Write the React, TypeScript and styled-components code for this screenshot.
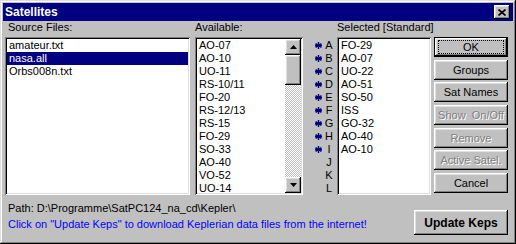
import React from "react";
import styled, { createGlobalStyle, css } from "styled-components";

const GlobalStyle = createGlobalStyle`
  html, body {
    margin: 0;
    padding: 0;
  }
  body {
    width: 516px;
    height: 244px;
    overflow: hidden;
    background: #c0c0c0;
    font-family: "Liberation Sans", Arial, sans-serif;
    font-size: 11px;
    color: #000;
  }
`;

const raised = css`
  background: #c0c0c0;
  box-shadow: inset -1px -1px #000, inset 1px 1px #fff,
    inset -2px -2px #808080, inset 2px 2px #dfdfdf;
`;

const sunken = css`
  background: #fff;
  box-shadow: inset 1px 1px #808080, inset -1px -1px #fff,
    inset 2px 2px #000, inset -2px -2px #dfdfdf;
`;

const Window = styled.div`
  width: 516px;
  height: 244px;
  box-sizing: border-box;
  padding: 3px;
  background: #c0c0c0;
  box-shadow: inset -1px -1px #000, inset 1px 1px #dfdfdf,
    inset -2px -2px #808080, inset 2px 2px #fff;
  display: flex;
  flex-direction: column;
`;

const TitleBar = styled.div`
  height: 18px;
  background: #000080;
  color: #fff;
  display: flex;
  align-items: center;
  justify-content: space-between;
  padding: 0 3px 0 2px;
  font-weight: bold;
  font-size: 12px;
`;

const CloseButton = styled.div`
  ${raised};
  width: 16px;
  height: 14px;
  display: flex;
  align-items: center;
  justify-content: center;
`;

const Content = styled.div`
  padding: 0 5px 0 2px;
  display: flex;
  flex-direction: column;
`;

const MainRow = styled.div`
  display: flex;
  align-items: flex-start;
`;

const Column = styled.div<{ $w: number; $ml?: number }>`
  width: ${(p) => p.$w}px;
  margin-left: ${(p) => p.$ml ?? 0}px;
  display: flex;
  flex-direction: column;
`;

const Label = styled.div<{ $indent?: number }>`
  height: 16px;
  line-height: 13px;
  padding-left: ${(p) => p.$indent ?? 0}px;
  white-space: nowrap;
`;

const ListBox = styled.div`
  ${sunken};
  height: 158px;
  box-sizing: border-box;
  padding: 2px;
  display: flex;
  overflow: hidden;
`;

const Items = styled.div`
  flex: 1;
  overflow: hidden;
`;

const Item = styled.div<{ $selected?: boolean }>`
  height: 13px;
  line-height: 13px;
  padding-left: 2px;
  white-space: nowrap;
  background: ${(p) => (p.$selected ? "#000080" : "transparent")};
  color: ${(p) => (p.$selected ? "#fff" : "#000")};
`;

const ScrollBar = styled.div`
  width: 16px;
  display: flex;
  flex-direction: column;
  background: repeating-conic-gradient(#c0c0c0 0 25%, #fff 0 50%) 0 0 / 2px
    2px;
`;

const ScrollButton = styled.div`
  ${raised};
  height: 16px;
  display: flex;
  align-items: center;
  justify-content: center;
`;

const Thumb = styled.div`
  ${raised};
  height: 30px;
`;

const Track = styled.div`
  flex: 1;
`;

const LetterColumn = styled.div`
  width: 34px;
  padding-top: 18px;
`;

const LetterRow = styled.div`
  height: 13px;
  display: flex;
  align-items: center;
  padding-left: 12px;
`;

const StarSlot = styled.div`
  width: 7px;
  height: 7px;
  display: flex;
`;

const Letter = styled.span`
  width: 14px;
  text-align: center;
  line-height: 13px;
`;

const ButtonColumn = styled.div`
  width: 74px;
  margin-left: 3px;
  padding-top: 16px;
  height: 172px;
  box-sizing: border-box;
  display: flex;
  flex-direction: column;
  justify-content: space-between;
`;

const Button = styled.div<{ $disabled?: boolean; $default?: boolean }>`
  ${raised};
  position: relative;
  height: 20px;
  box-sizing: border-box;
  display: flex;
  align-items: center;
  justify-content: center;
  white-space: pre;
  color: ${(p) => (p.$disabled ? "#808080" : "#000")};
  text-shadow: ${(p) => (p.$disabled ? "1px 1px #fff" : "none")};
  ${(p) =>
    p.$default &&
    css`
      box-shadow: inset 0 0 0 1px #000, inset -2px -2px #000,
        inset 2px 2px #fff, inset -3px -3px #808080, inset 3px 3px #dfdfdf;
      &::after {
        content: "";
        position: absolute;
        inset: 3px 4px 3px 4px;
        border: 1px dotted #000;
      }
    `}
`;

const BigButton = styled(Button)`
  width: 94px;
  height: 25px;
  margin-top: 15px;
  font-weight: bold;
  font-size: 12px;
`;

const Footer = styled.div`
  display: flex;
  justify-content: space-between;
  align-items: flex-start;
`;

const FooterText = styled.div`
  padding: 5px 0 0 3px;
  line-height: 16px;
  white-space: nowrap;
`;

const Hint = styled.div`
  color: #0000ff;
`;

const sourceFiles = ["amateur.txt", "nasa.all", "Orbs008n.txt"];
const available = [
  "AO-07",
  "AO-10",
  "UO-11",
  "RS-10/11",
  "FO-20",
  "RS-12/13",
  "RS-15",
  "FO-29",
  "SO-33",
  "AO-40",
  "VO-52",
  "UO-14",
];
const selected = [
  "FO-29",
  "AO-07",
  "UO-22",
  "AO-51",
  "SO-50",
  "ISS",
  "GO-32",
  "AO-40",
  "AO-10",
];
const letters = "ABCDEFGHIJKL".split("");

const Star = () => (
  <svg width="7" height="7" viewBox="0 0 7 7">
    <path
      d="M3.5 0V7M0.6 1.6L6.4 5.4M0.6 5.4L6.4 1.6M0 3.5H7"
      stroke="#000080"
      strokeWidth="1.4"
    />
  </svg>
);

const CloseIcon = () => (
  <svg width="8" height="7" viewBox="0 0 8 7">
    <path d="M0.5 0.5L7.5 6.5M7.5 0.5L0.5 6.5" stroke="#000" strokeWidth="1.6" />
  </svg>
);

const Arrow = ({ up }: { up?: boolean }) => (
  <svg width="7" height="4" viewBox="0 0 7 4">
    <path d={up ? "M3.5 0L7 4H0Z" : "M0 0H7L3.5 4Z"} fill="#000" />
  </svg>
);

const buttons = [
  { label: "OK", default: true },
  { label: "Groups" },
  { label: "Sat Names" },
  { label: "Show  On/Off", disabled: true },
  { label: "Remove", disabled: true },
  { label: "Active Satel.", disabled: true },
  { label: "Cancel" },
];

export default function App() {
  return (
    <>
      <GlobalStyle />
      <Window>
        <TitleBar>
          <span>Satellites</span>
          <CloseButton>
            <CloseIcon />
          </CloseButton>
        </TitleBar>
        <Content>
          <MainRow>
            <Column $w={185}>
              <Label $indent={3}>Source Files:</Label>
              <ListBox>
                <Items>
                  {sourceFiles.map((f) => (
                    <Item key={f} $selected={f === "nasa.all"}>
                      {f}
                    </Item>
                  ))}
                </Items>
              </ListBox>
            </Column>
            <Column $w={108} $ml={5}>
              <Label>Available:</Label>
              <ListBox>
                <Items>
                  {available.map((s) => (
                    <Item key={s}>{s}</Item>
                  ))}
                </Items>
                <ScrollBar>
                  <ScrollButton>
                    <Arrow up />
                  </ScrollButton>
                  <Thumb />
                  <Track />
                  <ScrollButton>
                    <Arrow />
                  </ScrollButton>
                </ScrollBar>
              </ListBox>
            </Column>
            <LetterColumn>
              {letters.map((l, i) => (
                <LetterRow key={l}>
                  <StarSlot>{i < 9 && <Star />}</StarSlot>
                  <Letter>{l}</Letter>
                </LetterRow>
              ))}
            </LetterColumn>
            <Column $w={94}>
              <Label>Selected [Standard]</Label>
              <ListBox>
                <Items>
                  {selected.map((s) => (
                    <Item key={s}>{s}</Item>
                  ))}
                </Items>
              </ListBox>
            </Column>
            <ButtonColumn>
              {buttons.map((b) => (
                <Button
                  key={b.label}
                  $default={b.default}
                  $disabled={b.disabled}
                >
                  {b.label}
                </Button>
              ))}
            </ButtonColumn>
          </MainRow>
          <Footer>
            <FooterText>
              <div>Path: D:\Programme\SatPC124_na_cd\Kepler\</div>
              <Hint>
                Click on "Update Keps" to download Keplerian data files from the
                internet!
              </Hint>
            </FooterText>
            <BigButton>Update Keps</BigButton>
          </Footer>
        </Content>
      </Window>
    </>
  );
}
